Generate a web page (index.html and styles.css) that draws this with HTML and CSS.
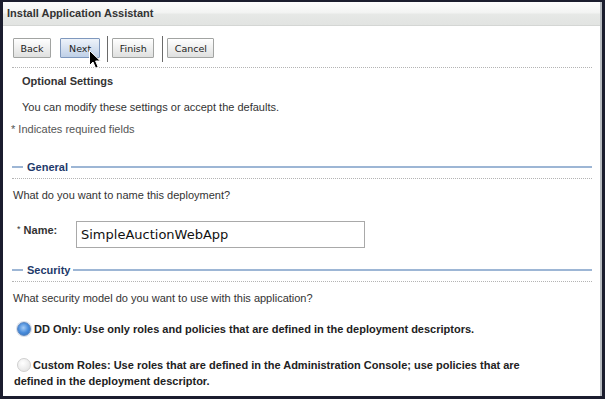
FILE: index.html
```html
<!DOCTYPE html>
<html>
<head>
<meta charset="utf-8">
<link rel="stylesheet" href="styles.css">
</head>
<body>
<div class="window">
  <div class="titlebar">Install Application Assistant</div>
  <div class="toolbar">
    <button class="btn btn-back">Back</button>
    <button class="btn btn-next">Next</button>
    <span class="sep"></span>
    <button class="btn btn-finish">Finish</button>
    <span class="sep"></span>
    <button class="btn">Cancel</button>
    <svg class="cursor" width="15" height="22" viewBox="0 0 15 22">
      <path d="M1.5 1.5 L1.5 16.5 L5 13 L7.6 19.2 L10.2 18.1 L7.6 12 L12.4 12 Z" fill="#000" stroke="#fff" stroke-width="1" stroke-linejoin="round"/>
    </svg>
  </div>
  <div class="dotted top-rule"></div>
  <div class="intro">
    <h2 class="intro-title">Optional Settings</h2>
    <p class="intro-text">You can modify these settings or accept the defaults.</p>
  </div>
  <p class="required">* Indicates required fields</p>

  <div class="section general">
    <div class="legend"><span class="dash"></span><span class="legend-text">General</span><span class="line"></span></div>
    <div class="dotted"></div>
    <p class="question">What do you want to name this deployment?</p>
    <div class="field">
      <label class="field-label"><span class="star">*</span> Name:</label>
      <div class="input">SimpleAuctionWebApp</div>
    </div>
  </div>

  <div class="section security">
    <div class="legend"><span class="dash"></span><span class="legend-text">Security</span><span class="line"></span></div>
    <div class="dotted"></div>
    <p class="question">What security model do you want to use with this application?</p>
    <div class="radio-row first">
      <span class="radio checked"></span><span class="radio-text">DD Only: Use only roles and policies that are defined in the deployment descriptors.</span>
    </div>
    <div class="radio-row second">
      <span class="radio"></span>Custom Roles: Use roles that are defined in the Administration Console; use policies that are defined in the deployment descriptor.
    </div>
  </div>
</div>
</body>
</html>
```
FILE: styles.css
```css
html, body {
  margin: 0;
  padding: 0;
}
body {
  background: #1b1d2e;
  width: 605px;
  height: 399px;
  overflow: hidden;
  font-family: "Liberation Sans", Arial, sans-serif;
  font-size: 11px;
  line-height: 14px;
  color: #333;
}
.window {
  margin: 2px 0 0 3px;
  width: 597px;
  height: 394px;
  background: #fff;
  border-right: 2px solid #b9bdc2;
  overflow: hidden;
}
.titlebar {
  height: 23px;
  line-height: 22px;
  padding-left: 4px;
  font-weight: bold;
  font-size: 11px;
  color: #333;
  background: linear-gradient(#fcfcfc 0%, #f3f4f3 45%, #e6e8e6 55%, #e2e4e2 100%);
  border-bottom: 1px solid #d4d6d4;
}
.toolbar {
  position: relative;
  display: flex;
  align-items: flex-start;
  padding-left: 10px;
  height: 36px;
}
.btn {
  height: 20px;
  padding: 0 6.5px;
  margin: 12px 9px 0 0;
  font-family: "DejaVu Sans", sans-serif;
  font-size: 9.5px;
  color: #222;
  border: 1px solid #a2a4a2;
  border-radius: 1px;
  background: linear-gradient(#ffffff, #dfe0df);
}
.btn-next {
  padding: 0 8px;
  margin-right: 7px;
  border-color: #7f98bd;
  background: linear-gradient(#eef3fa, #bfd0e7);
}
.btn-finish {
  margin-right: 8px;
}
.sep {
  width: 1px;
  height: 26px;
  margin: 10px 4px 0 0;
  background: #6a6a6a;
}
.cursor {
  position: absolute;
  left: 85px;
  top: 23px;
}
.dotted {
  height: 0;
  border-top: 1px dotted #b4b4b4;
}
.top-rule {
  margin: 5px 8px 0 9px;
}
.intro {
  padding-left: 19px;
}
.intro-title {
  margin: 6px 0 0;
  font-size: 11px;
  line-height: 14px;
  font-weight: bold;
  color: #333;
}
.intro-text {
  margin: 12px 0 0;
}
.required {
  margin: 8px 0 0 8px;
  color: #555;
}
.section {
  margin: 24px 8px 0 9px;
}
.legend {
  display: flex;
  align-items: center;
  height: 14px;
}
.dash {
  width: 11px;
  height: 2px;
  background: #9db6d5;
}
.legend-text {
  padding: 0 3px 0 4px;
  font-weight: bold;
  color: #1e3a6a;
}
.line {
  flex: 1;
  height: 2px;
  background: #9db6d5;
}
.section .dotted {
  margin-top: 4px;
}
.question {
  margin: 9px 0 0 1px;
}
.field {
  display: flex;
  align-items: flex-start;
  margin-top: 19px;
  padding-left: 5px;
}
.field-label {
  width: 59px;
  padding-top: 1px;
  font-weight: bold;
  color: #333;
}
.star {
  font-weight: normal;
  font-size: 9px;
  vertical-align: 2px;
}
.input {
  width: 283px;
  height: 25px;
  line-height: 26px;
  padding-left: 4px;
  border: 1px solid #a9a9a9;
  font-family: "DejaVu Sans", sans-serif;
  font-size: 13px;
  color: #111;
}
.security {
  margin-top: 15px;
}
.radio-row {
  font-weight: bold;
  color: #222;
}
.radio-row.first {
  display: flex;
  align-items: center;
  margin-top: 17px;
  padding-left: 5px;
}
.radio {
  display: inline-block;
  box-sizing: border-box;
  width: 14px;
  height: 14px;
  border-radius: 50%;
  border: 1px solid #cfcfcf;
  background: radial-gradient(circle at 40% 35%, #ffffff, #ebebeb 60%, #dcdcdc 100%);
  margin-right: 2px;
  vertical-align: -3px;
}
.radio.checked {
  border: 1px solid #5a86c0;
  background: radial-gradient(circle at 45% 40%, #a6ccf5 0%, #4a8ddc 50%, #2d6ab4 100%);
  box-shadow: 0 0 0 1px #d8dee8;
  margin-right: 3px;
}
.radio-row.second {
  margin-top: 21px;
  padding-left: 2px;
  max-width: 530px;
  line-height: 16px;
}
.second .radio {
  margin-left: 3px;
}
```
